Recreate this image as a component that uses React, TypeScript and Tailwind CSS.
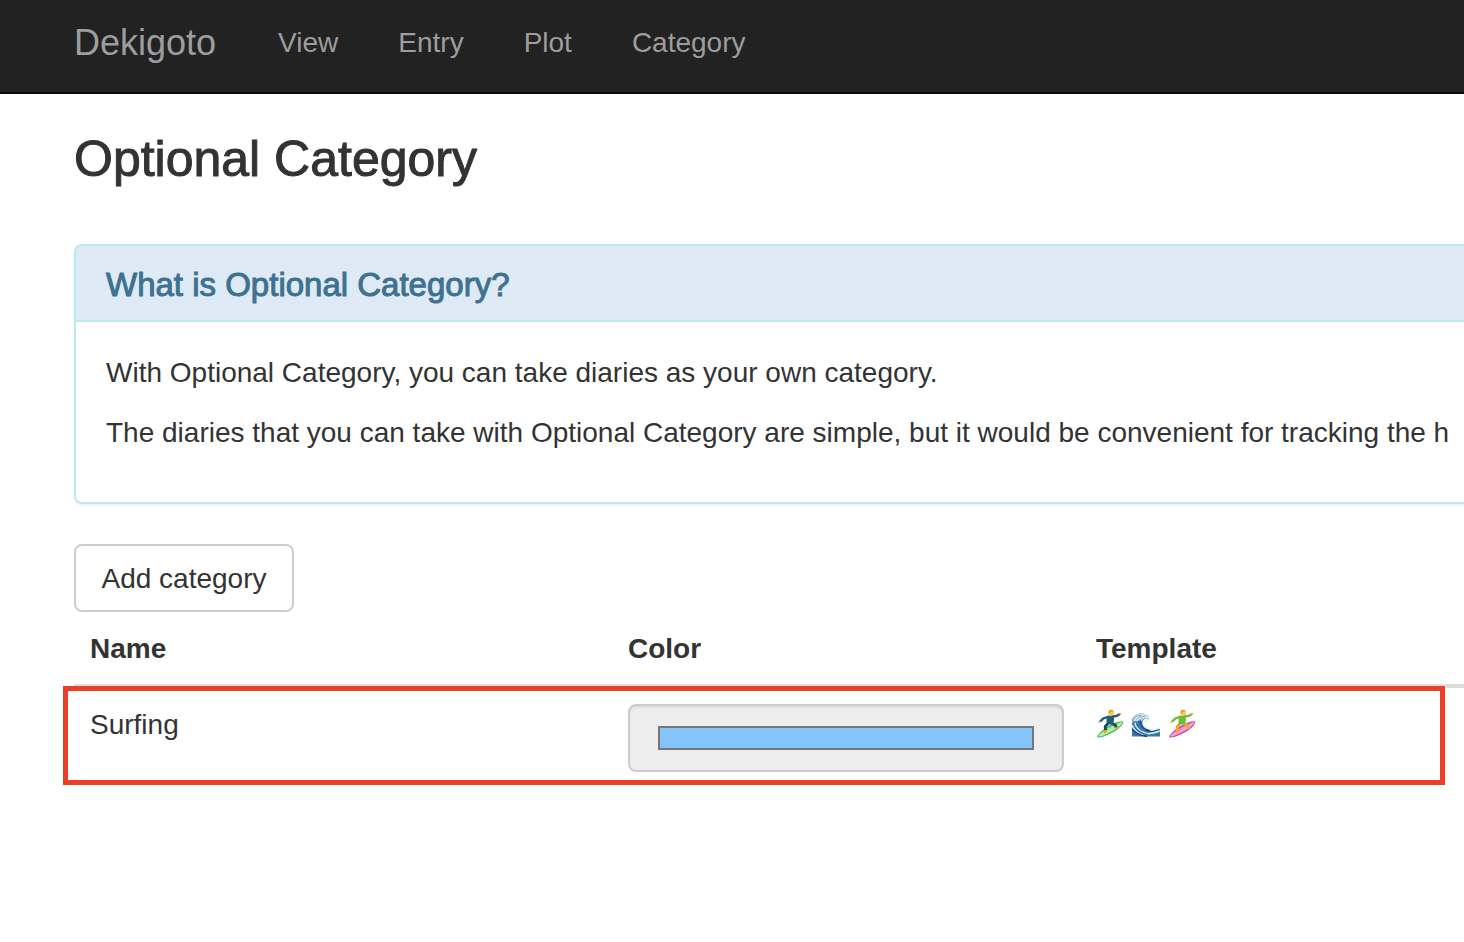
const navLinks = ["View", "Entry", "Plot", "Category"];

function Surfer({ label, suit, legs, board, trim }: { label: string; suit: string; legs: string; board: string; trim: string }) {
  return (
    <svg role="img" aria-label={label} viewBox="0 0 28 30" className="h-[30px] w-7">
      <path d="M1 28.2C2 24 9 18.5 16 15.2C21 12.8 26 11.6 27.2 12.8C27.6 16 22 21 14.5 24.8C8.5 27.8 2.8 29.2 1 28.2Z" fill={trim} />
      <path d="M2 27.5C5 23.3 11 19.6 17 16.6C21.5 14.4 25 13 26.5 13.3C25.8 16.5 19.5 20.7 13.5 23.7C8.5 26.2 4 27.8 2 27.5Z" fill={board} />
      <path d="M3 27C10 23.5 19 19 26 13.5" stroke="#fff" strokeOpacity=".4" strokeWidth="1" fill="none" />
      <path d="M12.5 14L9.3 17.5L9.6 21.5M15.5 14L19.5 16.2L20.2 18.8" stroke={legs} strokeWidth="3" strokeLinejoin="round" fill="none" />
      <path d="M7.4 23.3L10 20.6L11.5 22.2L8.7 24.6ZM19 18.2L21.3 18L23 19L20.3 20Z" fill="#f9a72b" />
      <path d="M12.5 7.8L7.4 9.4L4 12.6M16.5 7.3L20.5 7L24 5" stroke={suit} strokeWidth="2.4" strokeLinejoin="round" fill="none" />
      <path d="M11 6.8L17.8 6.3L18 11L16.8 15.5L10.7 15.5L10.5 11Z" fill={suit} />
      <path d="M2 13.2L3.5 11.7L5 12.2L3.2 13.9ZM23.3 4.8L25 3.8L25.4 5L24 6Z" fill="#f6a62c" />
      <ellipse cx="15.2" cy="3.9" rx="2.6" ry="3" fill="#ffc34a" />
      <path d="M12.5 3.7C12.5 0 17.2 0 17.8 2.8C16.3 1.8 14.3 2.2 13.2 4.4Z" fill="#df951f" />
    </svg>
  );
}

function Wave() {
  return (
    <svg role="img" aria-label="Wave" viewBox="0 0 28 30" className="h-[30px] w-7">
      <path d="M0 27.5V11C2 6.8 6.4 4 10.5 4.4C14.4 4.5 16.7 7 17.6 9.6C15.7 8.8 13.7 9 12 10.5C9.5 12.5 9.6 16.6 13.8 19.2C18.6 22 22.5 20.4 28 18.4V27.5Z" fill="#3878a8" />
      <path d="M0 14C1 8 6 4 10.5 4.4C14.4 4.5 16.7 7 17.6 9.6C14 8 11 9.8 9.5 12.3C8 11 6.5 11 5.4 12.6C3.8 11.5 1.8 12 0 14Z" fill="#d5e7ef" />
      <path d="M1 12.5C3 7.5 6 6 9 6.4M4 11.5C6 8 9 6.8 14 7.3M7 11.5L11 8.8" stroke="#84acc1" strokeWidth="1" fill="none" />
      <path d="M8.5 11.5C7.5 17 12 21 18.5 22.5" stroke="#1e45a8" strokeWidth="1.6" fill="none" />
      <path d="M3 13.5C3.5 19 9 23.5 18 25M0 16C2 22 6 24.5 12 27M17 24C21 25 24 23 28 22" stroke="#d9eaf1" strokeWidth="1.5" fill="none" />
      <path d="M0 20C4 25 10 27 15 27.5M14 20.5C19 23.5 23 21.5 28 19.5" stroke="#183f70" strokeWidth="1.4" fill="none" />
      <path d="M17 21L20 19.7L22 20L24 18.7L26 19.2L28 17.5V20L24 21L20 22Z" fill="#e8f3f8" />
      <circle cx="15.7" cy="10.7" r=".9" fill="#b9d9e9" />
      <circle cx="13.5" cy="12" r=".7" fill="#b9d9e9" />
      <circle cx="17" cy="7" r=".7" fill="#d5e7ef" />
    </svg>
  );
}

export default function App() {
  return (
    <div className="min-h-screen overflow-x-hidden bg-white font-['Liberation_Sans',Arial,sans-serif] text-[28px] leading-10 text-[#333]">
      <nav className="flex h-[94px] items-start border-b-2 border-[#080808] bg-[#222] pl-[74px] pt-[23px] text-[#9d9d9d]">
        <a href="#" className="mr-8 text-4xl leading-10">Dekigoto</a>
        {navLinks.map((name) => (
          <a key={name} href={`#${name.toLowerCase()}`} className="px-[30px]">{name}</a>
        ))}
      </nav>

      <main className="pl-[74px]">
        <h1 className="pt-[38px] text-[50px] leading-[54px] [-webkit-text-stroke:1px_currentColor]">Optional Category</h1>

        <section className="mt-[58px] rounded-l-lg border-2 border-r-0 border-[#bce8f1] shadow-[0_2px_2px_rgba(0,0,0,0.05)]">
          <div className="rounded-tl-md border-b-2 border-[#bce8f1] bg-[#deebf7] px-[30px] pb-[18px] pt-[22px]">
            <h2 className="text-[33px] leading-[34px] text-[#3f7190] [-webkit-text-stroke:1px_currentColor]">What is Optional Category?</h2>
          </div>
          <div className="whitespace-nowrap px-[30px] pb-[29px] pt-[31px]">
            <p className="mb-5">With Optional Category, you can take diaries as your own category.</p>
            <p className="mb-5">The diaries that you can take with Optional Category are simple, but it would be convenient for tracking the h</p>
          </div>
        </section>

        <button type="button" className="mt-10 block min-w-[220px] rounded-lg border-2 border-[#ccc] bg-white px-6 pb-[11px] pt-[13px]">Add category</button>

        <div className="relative">
          <table className="w-full table-fixed border-collapse text-left">
            <thead>
              <tr>
                <th className="w-[538px] px-4 pb-[15px] pt-[17px]">Name</th>
                <th className="w-[468px] px-4 pb-[15px] pt-[17px]">Color</th>
                <th className="px-4 pb-[15px] pt-[17px]">Template</th>
              </tr>
            </thead>
            <tbody>
              <tr className="border-t-4 border-[#ddd] align-top">
                <td className="px-4 pt-[17px]">Surfing</td>
                <td className="p-4">
                  <input
                    type="color"
                    aria-label="Surfing color"
                    defaultValue="#84c4fa"
                    disabled
                    className="block h-[68px] w-full rounded-lg border-2 border-[#ccc] bg-[#eee] px-6 py-3 shadow-[inset_0_2px_2px_rgba(0,0,0,0.075)] [&::-webkit-color-swatch-wrapper]:px-1 [&::-webkit-color-swatch-wrapper]:py-2 [&::-webkit-color-swatch]:rounded-none [&::-webkit-color-swatch]:border-2 [&::-webkit-color-swatch]:border-[#777]"
                  />
                </td>
                <td className="p-4">
                  <div className="flex h-10 items-center gap-2">
                    <Surfer label="Man surfing" suit="#245c7b" legs="#194b68" board="#a8ee8c" trim="#55b866" />
                    <Wave />
                    <Surfer label="Woman surfing" suit="#6fbd3c" legs="#efa52b" board="#ef8ed5" trim="#c94ca4" />
                  </div>
                </td>
              </tr>
            </tbody>
          </table>
          <div className="pointer-events-none absolute -left-[11px] bottom-[3px] right-[19px] h-[99px] border-5 border-[#eb4025]" />
        </div>
      </main>
    </div>
  );
}
